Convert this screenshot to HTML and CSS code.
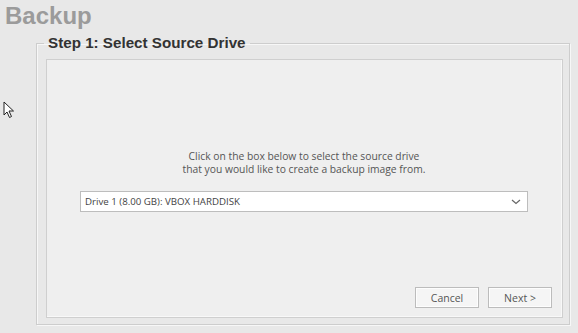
FILE: index.html
```html
<!DOCTYPE html>
<html>
<head>
<meta charset="utf-8">
<link rel="stylesheet" href="styles.css">
</head>
<body>
<div class="page">
  <h1 class="title">Backup</h1>
  <fieldset class="group">
    <legend class="legend">Step 1: Select Source Drive</legend>
    <div class="panel">
      <p class="hint">Click on the box below to select the source drive<br>that you would like to create a backup image from.</p>
      <div class="select">
        <span class="select-text">Drive 1 (8.00 GB): VBOX HARDDISK</span>
        <svg class="chev" width="10" height="6" viewBox="0 0 10 6"><path d="M1 1 L5 4.5 L9 1" fill="none" stroke="#666" stroke-width="1.2"/></svg>
      </div>
      <div class="spacer"></div>
      <div class="buttons">
        <button class="btn">Cancel</button>
        <button class="btn">Next &gt;</button>
      </div>
    </div>
  </fieldset>
  <svg class="cursor" width="12" height="18" viewBox="0 0 12 18"><path d="M1 1 L1 14 L4 11 L6.5 16.5 L8.5 15.5 L6 10 L10.5 10 Z" fill="#fff" stroke="#222" stroke-width="1"/></svg>
</div>
</body>
</html>
```
FILE: styles.css
```css
html, body {
  margin: 0;
  padding: 0;
  background: #e8e8e8;
  width: 578px;
  height: 333px;
  overflow: hidden;
}
.page {
  position: relative;
  width: 578px;
  height: 333px;
}
.title {
  margin: 0;
  padding: 2px 0 0 5px;
  height: 34px;
  box-sizing: border-box;
  font-family: "Liberation Sans", Arial, sans-serif;
  font-weight: bold;
  font-size: 24px;
  line-height: 28px;
  color: #9b9b9b;
}
.group {
  margin: 0 8px 0 36px;
  padding: 7px 6px 6px 9px;
  border: 1px solid #cdcdcd;
  box-shadow: inset 1px 1px 0 #f7f7f7, 1px 1px 0 #f7f7f7;
  height: 291px;
  box-sizing: border-box;
  display: flex;
}
.legend {
  margin-left: -2px;
  padding: 0 4px;
  font-family: "Liberation Sans", Arial, sans-serif;
  font-weight: bold;
  font-size: 15.2px;
  line-height: 18px;
  color: #333;
}
.panel {
  flex: 1;
  background: #efefef;
  border: 1px solid #cfcfcf;
  box-shadow: inset -1px -1px 0 #f8f8f8;
  display: flex;
  flex-direction: column;
  align-items: center;
  padding: 0 34px 9px 33px;
}
.hint {
  margin: 90px 0 0 0;
  text-align: center;
  font-family: "Open Sans", sans-serif;
  font-size: 10.3px;
  line-height: 13px;
  color: #555;
}
.select {
  margin-top: 15px;
  align-self: stretch;
  height: 21px;
  box-sizing: border-box;
  background: #fff;
  border: 1px solid #bdbdbd;
  display: flex;
  align-items: center;
  padding: 0 6px 0 4px;
}
.select-text {
  flex: 1;
  font-family: "Open Sans", sans-serif;
  font-size: 9.7px;
  color: #444;
}
.spacer {
  flex: 1;
}
.buttons {
  align-self: flex-end;
  display: flex;
  gap: 9px;
  margin-right: -24px;
}
.btn {
  width: 64px;
  height: 21px;
  background: #f5f5f5;
  border: 1px solid #bcbcbc;
  box-shadow: inset 0 0 0 1px #fdfdfd;
  font-family: "Open Sans", sans-serif;
  font-size: 10.5px;
  color: #555;
  padding: 0;
}
.cursor {
  position: absolute;
  left: 3px;
  top: 101px;
}
```
